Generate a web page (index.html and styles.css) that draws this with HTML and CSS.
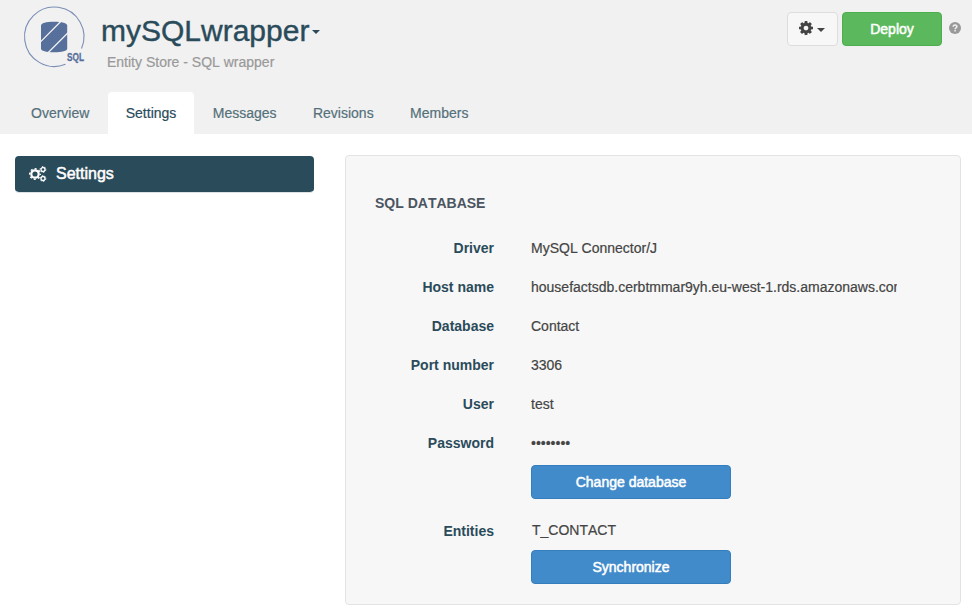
FILE: index.html
```html
<!DOCTYPE html>
<html lang="en">
<head>
<meta charset="utf-8">
<title>mySQLwrapper - Settings</title>
<link rel="stylesheet" href="styles.css">
</head>
<body>
<svg class="defs" aria-hidden="true">
  <symbol id="cog" viewBox="0 -128 1536 1536">
    <path d="M1024 640q0-106-75-181t-181-75-181 75-75 181 75 181 181 75 181-75 75-181zm512-109v222q0 12-8 23t-20 13l-185 28q-19 54-39 91 35 50 107 138 10 12 10 25t-9 23q-27 37-99 108t-94 71q-12 0-26-9l-138-108q-44 23-91 38-16 136-29 186-7 28-36 28h-222q-14 0-24.5-8.500t-11.500-21.500l-28-184q-49-16-90-37l-141 107q-10 9-25 9-14 0-25-11-126-114-165-168-7-10-7-23 0-12 8-23 15-21 51-66.500t54-70.500q-27-50-41-99l-183-27q-13-2-21-12.500t-8-23.500v-222q0-12 8-23t19-13l186-28q14-46 39-92-40-57-107-138-10-12-10-24 0-10 9-23 26-36 98.500-107.500t94.500-71.500q13 0 26 10l138 107q44-23 91-38 16-136 29-186 7-28 36-28h222q14 0 24.500 8.500t11.500 21.500l28 184q49 16 90 37l142-107q9-9 24-9 13 0 25 10 129 119 165 170 7 8 7 22 0 12-8 23-15 21-51 66.500t-54 70.500q26 50 41 98l183 28q13 2 21 12.500t8 23.500z"/>
  </symbol>
</svg>
<header class="header">
  <div class="masthead">
    <svg class="logo" viewBox="0 0 62 62" width="62" height="62">
      <path d="M42.500 58.200A29.700 29.700 0 1 1 58.500 42.500" fill="none" stroke="#7b8fb5" stroke-width="1.100"/>
      <path d="M18 19.500c0-2.500 5-3.800 13-3.800s13.200 1.300 13.200 3.800v23c0 2.500-5.200 3.800-13.200 3.800s-13-1.300-13-3.800z" fill="#566f9b"/>
      <path d="M17.500 35.900 38 15.200M25 46.800 45 26.700" stroke="#f1f1f1" stroke-width="1.300"/>
      <text class="logo-text" x="44" y="55" textLength="17" lengthAdjust="spacingAndGlyphs">SQL</text>
    </svg>
    <div class="heading">
      <h1 class="title">mySQLwrapper<span class="caret"></span></h1>
      <p class="subtitle">Entity Store - SQL wrapper</p>
    </div>
    <div class="actions">
      <button class="btn btn-tools"><svg class="cog" width="14" height="14"><use href="#cog"/></svg><span class="caret"></span></button>
      <button class="btn btn-deploy">Deploy</button>
      <svg class="help" viewBox="0 0 12 12" width="12" height="12"><circle cx="6" cy="6" r="6" fill="#999"/><path d="M4.200 4.700C4.200 2.300 7.900 2.400 7.900 4.500 7.900 5.900 6.100 5.800 6.100 7.200M6.100 8.100v1.500" fill="none" stroke="#f1f1f1" stroke-width="1.500"/></svg>
    </div>
  </div>
  <nav class="tabs">
    <a class="tab">Overview</a>
    <a class="tab active">Settings</a>
    <a class="tab">Messages</a>
    <a class="tab">Revisions</a>
    <a class="tab">Members</a>
  </nav>
</header>
<main class="content">
  <aside class="sidebar">
    <a class="side-item">
      <svg class="cogs" viewBox="0 0 18 16" width="18" height="16">
        <g fill="none" stroke="#fff">
          <circle cx="6" cy="8" r="3.700" stroke-width="2.200"/>
          <circle cx="6" cy="8" r="5.300" stroke-width="1.500" stroke-dasharray="2 2.160" stroke-dashoffset="1"/>
          <circle cx="14" cy="3.500" r="2" stroke-width="1.300"/>
          <circle cx="14" cy="3.500" r="2.900" stroke-width="1" stroke-dasharray="1.300 1.737"/>
          <circle cx="14" cy="12.500" r="2" stroke-width="1.300"/>
          <circle cx="14" cy="12.500" r="2.900" stroke-width="1" stroke-dasharray="1.300 1.737"/>
        </g>
      </svg>
      <span>Settings</span>
    </a>
  </aside>
  <section class="panel">
    <h2 class="section-title">SQL DATABASE</h2>
    <dl class="fields">
      <dt>Driver</dt><dd>MySQL Connector/J</dd>
      <dt>Host name</dt><dd>housefactsdb.cerbtmmar9yh.eu-west-1.rds.amazonaws.com</dd>
      <dt>Database</dt><dd>Contact</dd>
      <dt>Port number</dt><dd>3306</dd>
      <dt>User</dt><dd>test</dd>
      <dt>Password</dt><dd>••••••••</dd>
    </dl>
    <button class="btn btn-primary">Change database</button>
    <dl class="fields entities">
      <dt>Entities</dt><dd>T_CONTACT</dd>
    </dl>
    <button class="btn btn-primary">Synchronize</button>
  </section>
</main>
</body>
</html>
```
FILE: styles.css
```css
* { box-sizing: border-box; }
body {
  margin: 0;
  background: #fff;
  color: #444;
  font: 14px/20px "Liberation Sans", Arial, sans-serif;
  font-kerning: none;
}
h1, h2, p, dl, dd { margin: 0; }
.defs { position: absolute; width: 0; height: 0; }

.header {
  display: flex;
  flex-direction: column;
  justify-content: space-between;
  height: 134px;
  background: #f1f1f1;
}
.masthead { display: flex; padding: 6px 11px 0 23px; }
.logo { flex: none; overflow: visible; }
.logo-text { font: bold 11px "Liberation Sans", Arial, sans-serif; fill: #566f9b; stroke: #566f9b; stroke-width: .3px; }
.heading { margin-left: 16px; }
.title {
  display: flex;
  align-items: center;
  padding-top: 8px;
  font-size: 30px;
  line-height: 34px;
  font-weight: normal;
  color: #2a4b5a;
  -webkit-text-stroke: .4px #2a4b5a;
}
.title .caret { margin: 2px 0 0 3px; }
.subtitle { padding: 0 0 0 6px; margin-top: -2px; line-height: 32px; color: #999; -webkit-text-stroke: .2px #999; }
.caret {
  display: inline-block;
  border-top: 4px solid;
  border-left: 4px solid transparent;
  border-right: 4px solid transparent;
}
.actions { display: flex; align-items: flex-start; margin: 6px 0 0 auto; }
.btn {
  height: 34px;
  padding: 0;
  border: 1px solid;
  border-radius: 4px;
  font: inherit;
  font-kerning: none;
  color: #fff;
  -webkit-text-stroke: .5px;
}
.btn-tools {
  display: flex;
  align-items: center;
  justify-content: center;
  gap: 4px;
  width: 51px;
  margin-right: 4px;
  padding-right: 1px;
  border-color: #ddd;
  background: #f7f7f7;
  color: #444;
}
.btn-tools .caret { margin-top: 2px; }
.cog { fill: #444; margin-top: -2px; }
.btn-deploy { width: 100px; border-color: #4cae4c; background: #5cb85c; }
.help { margin: 10px 0 0 7px; }

.tabs { display: flex; gap: .4px; padding-left: 13px; }
.tab {
  height: 42px;
  padding: 0 18px;
  border-radius: 4px 4px 0 0;
  line-height: 42px;
  color: #54707a;
  -webkit-text-stroke: .2px;
}
.tab.active { background: #fff; color: #2a4b5a; }

.content {
  display: grid;
  grid-template-columns: 299px 616px;
  gap: 31px;
  align-items: start;
  padding: 21px 11px 0 15px;
}
.side-item {
  display: flex;
  align-items: center;
  gap: 9px;
  height: 37px;
  margin-top: 1px;
  padding-left: 14px;
  border: 1px solid #dde2e4;
  border-width: 0 0 1px;
  border-radius: 4px;
  background: #2a4b5a;
  background-clip: padding-box;
  color: #fff;
  font-size: 16px;
  -webkit-text-stroke: .5px;
}
.cogs { flex: none; margin-top: -1px; }
.panel {
  height: 450px;
  padding: 37px 30px 0;
  border: 1px solid #e3e3e3;
  border-radius: 4px;
  background: #f7f7f7;
}
.section-title { margin-left: -1px; font-size: 14px; line-height: 20px; color: #4a5560; }
.fields {
  display: grid;
  grid-template-columns: 118px 366px;
  column-gap: 37px;
  row-gap: 5px;
  margin-top: 18px;
  line-height: 34px;
}
.fields dt { text-align: right; font-weight: bold; color: #2a4b5a; }
.fields dd { overflow: hidden; white-space: nowrap; -webkit-text-stroke: .2px; }
.btn-primary {
  display: block;
  width: 200px;
  margin: 5px 0 0 155px;
  border-color: #357ebd;
  background: #428bca;
}
.entities { margin-top: 15px; }
.entities dd { padding-left: 1px; margin-top: -1px; }
.entities + .btn { margin-top: 2px; }
```
